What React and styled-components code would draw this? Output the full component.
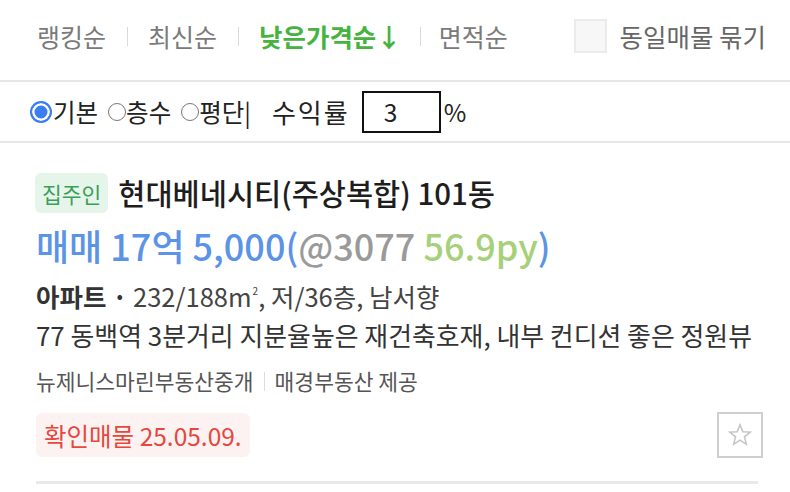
import React from "react";
import styled, { createGlobalStyle } from "styled-components";

const Global = createGlobalStyle`
  html, body { margin: 0; padding: 0; background: #fff; }
  body { font-family: "Noto Sans CJK KR", "Noto Sans", sans-serif; }
  * { box-sizing: border-box; }
`;

const Page = styled.div`
  width: 790px;
  height: 492px;
  overflow: hidden;
  background: #fff;
`;

const SortBar = styled.div`
  height: 82px;
  border-bottom: 2px solid #e6e6e6;
  display: flex;
  align-items: center;
  padding: 0 24px 8px 37px;
`;

const SortItem = styled.span`
  font-size: ${(p) => (p.$active ? 25.5 : 25)}px;
  line-height: 32px;
  color: ${(p) => (p.$active ? "#47b33f" : "#7a7a7a")};
  font-weight: ${(p) => (p.$active ? 700 : 400)};
  white-space: nowrap;
`;

const Sep = styled.span`
  width: 1px;
  height: 19px;
  background: #d9d9d9;
  margin: 0 ${(p) => p.$r || 20}px 0 ${(p) => p.$l || 21}px;
`;

const Spacer = styled.div`
  flex: 1;
`;

const Check = styled.span`
  width: 33px;
  height: 34px;
  border: 2px solid #ebebeb;
  background: #f7f7f7;
  margin-right: 13px;
`;

const CheckLabel = styled.span`
  font-size: 25.5px;
  line-height: 32px;
  color: #666;
`;

const OptionBar = styled.div`
  height: 61px;
  border-bottom: 2px solid #e6e6e6;
  display: flex;
  align-items: center;
  padding: 0 0 0 30px;
  font-size: 24.5px;
  color: #222;
`;

const Radio = styled.span`
  width: ${(p) => (p.$checked ? 22 : 18)}px;
  height: ${(p) => (p.$checked ? 22 : 18)}px;
  border-radius: 50%;
  border: ${(p) => (p.$checked ? "2px solid #3b7df2" : "1.6px solid #777")};
  background: ${(p) => (p.$checked ? "#3b7df2" : "#fff")};
  box-shadow: ${(p) => (p.$checked ? "inset 0 0 0 2.5px #fff" : "none")};
  margin: ${(p) => (p.$checked ? "0 1px 0 0" : "0 0 0 10px")};
  flex: none;
`;

const OptText = styled.span`
  line-height: 32px;
  white-space: pre;
  font-size: ${(p) => p.$fs || 24.5}px;
  letter-spacing: ${(p) => p.$ls || 0}px;
  margin-left: ${(p) => p.$ml || 0}px;
`;

const RateInput = styled.div`
  width: 79px;
  height: 42px;
  border: 2px solid #111;
  margin: 0 3px 0 12px;
  padding-left: 20px;
  display: flex;
  align-items: center;
  font-size: 24.5px;
  color: #222;
`;

const Card = styled.div`
  margin: 0 32px 0 36px;
  padding-top: 30px;
  border-bottom: 3px solid #e9e9e9;
  height: 341px;
  display: flex;
  flex-direction: column;
`;

const TitleRow = styled.div`
  display: flex;
  align-items: center;
  height: 40px;
`;

const OwnerTag = styled.span`
  background: #e5f5ea;
  color: #3c9f58;
  border-radius: 6px;
  height: 40px;
  padding: 0 7px;
  display: flex;
  align-items: center;
  font-size: 21.5px;
  margin-right: 10px;
  margin-left: -1px;
`;

const Title = styled.span`
  font-size: 29.5px;
  font-weight: 500;
  color: #1e1e1e;
  line-height: 40px;
  margin-top: -3px;
`;

const PriceRow = styled.div`
  margin-top: 12px;
  font-size: 36px;
  line-height: 40px;
  font-weight: 500;
  color: #5b93e6;
  white-space: nowrap;
`;

const Tone = styled.span`
  color: ${(p) => p.$c};
`;

const InfoRow = styled.div`
  margin-top: 9px;
  font-size: 25.5px;
  line-height: 34px;
  color: #444;
  white-space: nowrap;
`;

const Strong = styled.b`
  font-weight: 700;
  color: #333;
`;

const Sup = styled.sup`
  font-size: 10px;
  vertical-align: 12px;
  margin-left: 1px;
`;

const Desc = styled.div`
  margin-top: 5px;
  font-size: 25.9px;
  line-height: 34px;
  color: #333;
  white-space: nowrap;
`;

const Agency = styled.div`
  margin-top: 15px;
  font-size: 21.5px;
  line-height: 28px;
  color: #555;
  display: flex;
  align-items: center;
  white-space: nowrap;
`;

const SmallSep = styled.span`
  width: 1px;
  height: 19px;
  background: #ddd;
  margin: 0 10px;
`;

const BottomRow = styled.div`
  margin-top: 17px;
  display: flex;
  align-items: center;
  justify-content: space-between;
`;

const Verified = styled.span`
  background: #fdf2f2;
  color: #e5483d;
  border-radius: 6px;
  height: 44px;
  padding: 0 8px;
  display: flex;
  align-items: center;
  font-size: 24.5px;
  white-space: nowrap;
`;

const StarBox = styled.span`
  width: 46px;
  height: 46px;
  border: 2px solid #cfcfcf;
  margin-right: -5px;
  display: flex;
  align-items: center;
  justify-content: center;
`;

export default function App() {
  return (
    <Page>
      <Global />
      <SortBar>
        <SortItem>랭킹순</SortItem>
        <Sep />
        <SortItem>최신순</SortItem>
        <Sep />
        <SortItem $active>낮은가격순↓</SortItem>
        <Sep $l={18} $r={18} />
        <SortItem>면적순</SortItem>
        <Spacer />
        <Check />
        <CheckLabel>동일매물 묶기</CheckLabel>
      </SortBar>
      <OptionBar>
        <Radio $checked />
        <OptText>기본</OptText>
        <Radio />
        <OptText>층수</OptText>
        <Radio />
        <OptText>평단|</OptText>
        <OptText $ml={21} $fs={26} $ls={2}>수익률</OptText>
        <RateInput>3</RateInput>
        <OptText>%</OptText>
      </OptionBar>
      <Card>
        <TitleRow>
          <OwnerTag>집주인</OwnerTag>
          <Title>현대베네시티(주상복합) 101동</Title>
        </TitleRow>
        <PriceRow>
          매매 17억 5,000(<Tone $c="#9a9a9a">@3077</Tone>{" "}
          <Tone $c="#a6d17a">56.9py</Tone>)
        </PriceRow>
        <InfoRow>
          <Strong>아파트 · </Strong>232/188m<Sup>2</Sup>, 저/36층, 남서향
        </InfoRow>
        <Desc>77 동백역 3분거리 지분율높은 재건축호재, 내부 컨디션 좋은 정원뷰</Desc>
        <Agency>
          뉴제니스마린부동산중개
          <SmallSep />
          매경부동산 제공
        </Agency>
        <BottomRow>
          <Verified>확인매물 25.05.09.</Verified>
          <StarBox>
            <svg width="26" height="26" viewBox="0 0 24 24" fill="none" stroke="#c4c4c4" strokeWidth="1.4" strokeLinejoin="miter">
              <polygon points="12,2.5 14.6,9 21.5,9.3 16.1,13.7 17.9,20.6 12,16.7 6.1,20.6 7.9,13.7 2.5,9.3 9.4,9" />
            </svg>
          </StarBox>
        </BottomRow>
      </Card>
    </Page>
  );
}
